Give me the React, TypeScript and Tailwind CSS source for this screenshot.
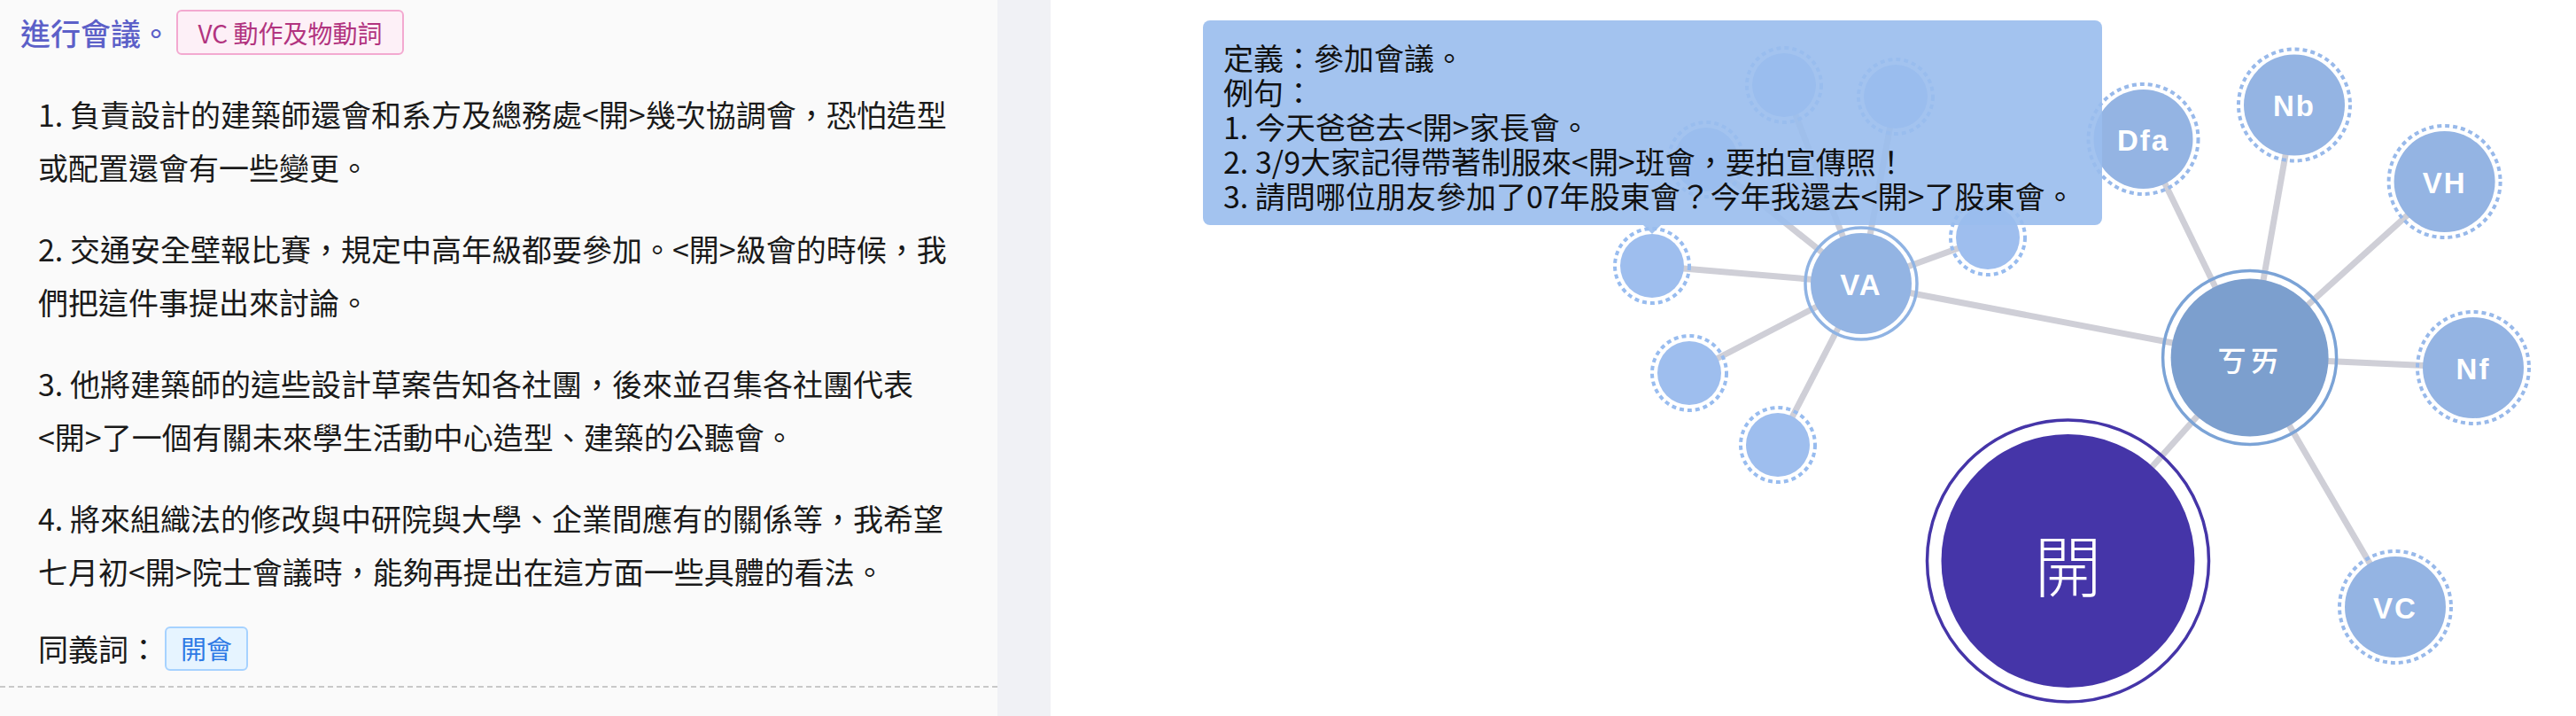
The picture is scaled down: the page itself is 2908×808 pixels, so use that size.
import React from "react";

type GNode = { x: number; y: number; r: number; label?: string; kind: "small" | "pos" | "va" | "zhuyin" | "word" };

// graph canvas coordinates are relative to the right panel
const nodes: GNode[] = [
	{ x: 740, y: 180, r: 36, kind: "small" },
	{ x: 828, y: 96, r: 36, kind: "small" },
	{ x: 954, y: 109, r: 36, kind: "small" },
	{ x: 679, y: 300, r: 36, kind: "small" },
	{ x: 721, y: 421, r: 36, kind: "small" },
	{ x: 821, y: 502, r: 36, kind: "small" },
	{ x: 1058, y: 268, r: 36, kind: "small" },
	{ x: 915, y: 320, r: 57, label: "VA", kind: "va" },
	{ x: 1233.5, y: 157, r: 56, label: "Dfa", kind: "pos" },
	{ x: 1404, y: 118.5, r: 57, label: "Nb", kind: "pos" },
	{ x: 1573.6, y: 205, r: 57, label: "VH", kind: "pos" },
	{ x: 1606, y: 415, r: 57, label: "Nf", kind: "pos" },
	{ x: 1518, y: 685, r: 57, label: "VC", kind: "pos" },
	{ x: 1353.6, y: 403.5, r: 89, label: "ㄎㄞ", kind: "zhuyin" },
	{ x: 1148.5, y: 633, r: 143, label: "開", kind: "word" },
];

const K = { x: 1353.6, y: 403.5 };
const VA = { x: 915, y: 320 };

const edges: [number, number, number, number][] = [
	[K.x, K.y, 1148.5, 633],
	[K.x, K.y, VA.x, VA.y],
	[K.x, K.y, 1233.5, 157],
	[K.x, K.y, 1404, 118.5],
	[K.x, K.y, 1573.6, 205],
	[K.x, K.y, 1606, 415],
	[K.x, K.y, 1518, 685],
	[VA.x, VA.y, 679, 300],
	[VA.x, VA.y, 721, 421],
	[VA.x, VA.y, 821, 502],
	[VA.x, VA.y, 1058, 268],
	[VA.x, VA.y, 740, 180],
	[VA.x, VA.y, 828, 96],
	[VA.x, VA.y, 954, 109],
];

const paragraphs = [
	["1. 負責設計的建築師還會和系方及總務處", "幾次協調會，恐怕造型或配置還會有一些變更。"],
	["2. 交通安全壁報比賽，規定中高年級都要參加。", "級會的時候，我們把這件事提出來討論。"],
	["3. 他將建築師的這些設計草案告知各社團，後來並召集各社團代表", "了一個有關未來學生活動中心造型、建築的公聽會。"],
	["4. 將來組織法的修改與中研院與大學、企業間應有的關係等，我希望七月初", "院士會議時，能夠再提出在這方面一些具體的看法。"],
];

const GraphNode = ({ n }: { n: GNode }) => {
	if (n.kind === "word") {
		return (
			<g>
				<circle cx={n.x} cy={n.y} r={n.r + 16} fill="none" stroke="#4535a8" strokeWidth={3.5} />
				<circle cx={n.x} cy={n.y} r={n.r} fill="#4535a8" />
				<text x={n.x} y={n.y + 2} textAnchor="middle" dominantBaseline="central" fill="#fff" fontSize={76} fontFamily="'Noto Sans CJK TC', sans-serif" fontWeight={300}>
					{n.label}
				</text>
			</g>
		);
	}
	if (n.kind === "zhuyin") {
		return (
			<g>
				<circle cx={n.x} cy={n.y} r={n.r + 9} fill="none" stroke="#7ba3d6" strokeWidth={3.5} />
				<circle cx={n.x} cy={n.y} r={n.r} fill="#7c9fce" />
				<text x={n.x} y={n.y + 2} textAnchor="middle" dominantBaseline="central" fill="#fff" fontSize={34} fontWeight={500} letterSpacing={3} fontFamily="'Noto Sans CJK TC', sans-serif">
					{n.label}
				</text>
			</g>
		);
	}
	if (n.kind === "va") {
		return (
			<g>
				<circle cx={n.x} cy={n.y} r={n.r + 6} fill="none" stroke="#8fb3e3" strokeWidth={3.5} />
				<circle cx={n.x} cy={n.y} r={n.r} fill="#93b4e3" />
				<text x={n.x} y={n.y + 1} textAnchor="middle" dominantBaseline="central" fill="#fff" fontSize={33} fontWeight={700} letterSpacing={2} fontFamily="'Liberation Sans', Arial, sans-serif">
					{n.label}
				</text>
			</g>
		);
	}
	const fill = n.kind === "small" ? "#9ebeee" : "#94b4e3";
	const ring = n.kind === "small" ? "#98bcef" : "#98b9ea";
	return (
		<g>
			<circle cx={n.x} cy={n.y} r={n.r + 6} fill="none" stroke={ring} strokeWidth={4} strokeDasharray="5 4" />
			<circle cx={n.x} cy={n.y} r={n.r} fill={fill} />
			{n.label && (
				<text x={n.x} y={n.y + 1} textAnchor="middle" dominantBaseline="central" fill="#fff" fontSize={33} fontWeight={700} letterSpacing={2} fontFamily="'Liberation Sans', Arial, sans-serif">
					{n.label}
				</text>
			)}
		</g>
	);
};

const App = () => {
	return (
		<div className="flex h-[808px] w-[2908px] overflow-hidden font-['Noto_Sans_CJK_TC','Noto_Sans',sans-serif]">
			{/* left: word detail */}
			<div className="w-[1126px] shrink-0 bg-[#fafafa] overflow-hidden">
				<div className="flex items-center gap-[6px] pl-[23px] pt-[11px]">
					<span className="text-[34px] leading-[50px] font-medium text-[#5c60c8]">進行會議。</span>
					<span className="flex h-[51px] w-[257px] items-center justify-center rounded-md border-2 border-[#f3a9d0] bg-[#fdf0f7] text-[28px] text-[#b2347f]">
						VC 動作及物動詞
					</span>
				</div>

				<div className="mt-[37px] w-[1083px] pl-[43px]">
					{paragraphs.map(([before, after], i) => (
						<p key={i} className="mb-[32px] text-[34px] leading-[60px] text-[#1a1a1a]">
							{before}
							<span className="whitespace-nowrap">&lt;開&gt;</span>
							{after}
						</p>
					))}
					<div className="flex items-center">
						<span className="text-[34px] leading-[50px] text-[#1a1a1a]">同義詞：</span>
						<span className="ml-[7px] flex h-[50px] w-[94px] items-center justify-center rounded-md border-2 border-[#a6d2ff] bg-[#e6f4ff] text-[29px] text-[#2f7ae5]">
							開會
						</span>
					</div>
				</div>
				<div className="mt-[17px] border-t-2 border-dashed border-[#c9c9c9]" />
			</div>

			{/* gutter */}
			<div className="w-[60px] shrink-0 bg-[#f0f1f5]" />

			{/* right: relation graph */}
			<div className="relative flex-1 bg-white overflow-hidden">
				<svg className="absolute inset-0" width="1722" height="808" viewBox="0 0 1722 808">
					{edges.map(([x1, y1, x2, y2], i) => (
						<line key={i} x1={x1} y1={y1} x2={x2} y2={y2} stroke="#cfcfd7" strokeWidth={7} />
					))}
					{nodes.map((n, i) => (
						<GraphNode key={i} n={n} />
					))}
				</svg>

				{/* tooltip */}
				<div className="absolute left-[172px] top-[23px] h-[231px] w-[1015px] rounded-lg bg-[rgba(153,189,237,0.9)] pl-[23px] pt-[22px] text-[34px] leading-[39px] text-[#111]">
					<div>定義：參加會議。</div>
					<div>例句：</div>
					<div>1. 今天爸爸去&lt;開&gt;家長會。</div>
					<div>2. 3/9大家記得帶著制服來&lt;開&gt;班會，要拍宣傳照！</div>
					<div>3. 請問哪位朋友參加了07年股東會？今年我還去&lt;開&gt;了股東會。</div>
					<div className="absolute bottom-[-10px] left-[497px] h-0 w-0 border-x-[10px] border-t-[10px] border-x-transparent border-t-[rgba(153,189,237,0.9)]" />
				</div>
			</div>
		</div>
	);
};

export default App;
